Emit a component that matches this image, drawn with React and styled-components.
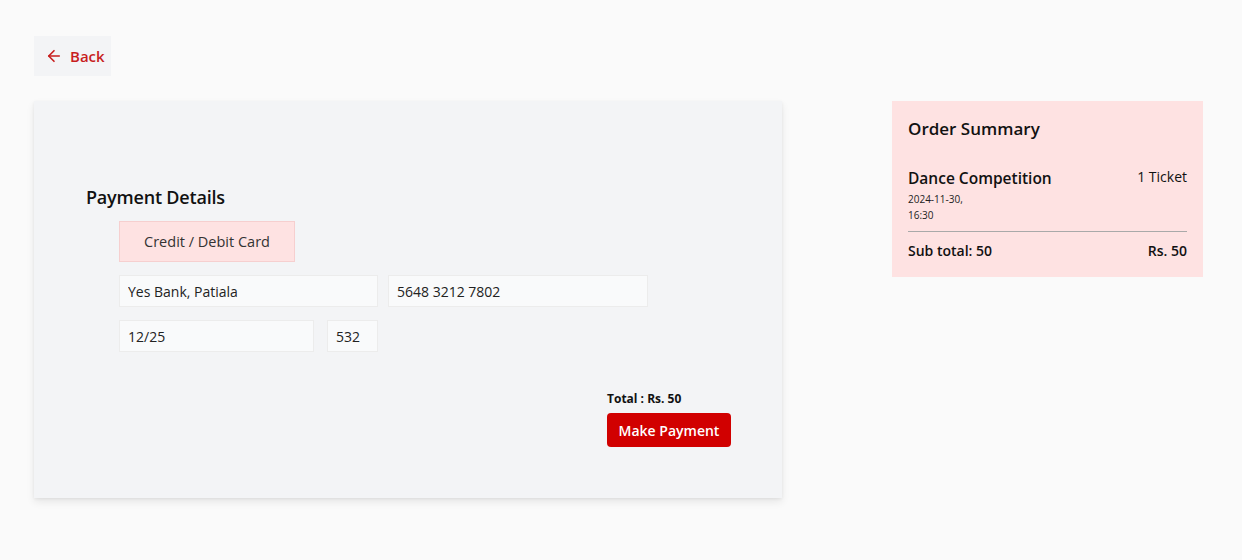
import React from "react";
import styled, { createGlobalStyle } from "styled-components";

const Global = createGlobalStyle`
  html, body { margin: 0; padding: 0; background: #fafafa; }
  body { font-family: "Open Sans", "DejaVu Sans", sans-serif; color: #111; }
  * { box-sizing: border-box; }
`;

const Page = styled.div`
  padding: 36px 34px;
  min-height: 560px;
`;

const BackButton = styled.button`
  display: inline-flex;
  align-items: center;
  gap: 7px;
  height: 40px;
  width: 77px;
  padding: 0 0 0 11px;
  border: none;
  background: #f3f4f6;
  color: #c81e1e;
  font-family: inherit;
  font-size: 15px;
  font-weight: 600;
  cursor: pointer;
`;

const Layout = styled.div`
  display: flex;
  align-items: flex-start;
  gap: 110px;
  margin-top: 25px;
`;

const Card = styled.div`
  width: 748px;
  height: 397px;
  background: #f3f4f6;
  box-shadow: 0 4px 8px rgba(0, 0, 0, 0.08), 0 1px 3px rgba(0, 0, 0, 0.06);
  padding: 84px 51px 0 52px;
  display: flex;
  flex-direction: column;
`;

const Heading = styled.h2`
  margin: 0;
  font-size: 18px;
  font-weight: 600;
  letter-spacing: -0.2px;
  color: #111;
`;

const Form = styled.div`
  padding-left: 33px;
  margin-top: 12px;
  display: flex;
  flex-direction: column;
`;

const MethodButton = styled.button`
  width: 176px;
  height: 41px;
  background: #fee2e2;
  border: 1px solid #f6cfcf;
  font-family: inherit;
  font-size: 14.5px;
  color: #333;
  cursor: pointer;
`;

const Row = styled.div`
  display: flex;
  gap: ${(p) => p.$gap}px;
  margin-top: ${(p) => p.$top}px;
`;

const Input = styled.input`
  width: ${(p) => p.$w}px;
  height: 32px;
  border: 1px solid #ececec;
  background: #f9fafb;
  padding: 0 8px;
  font-family: inherit;
  font-size: 14px;
  color: #222;
  outline: none;
`;

const Footer = styled.div`
  display: flex;
  flex-direction: column;
  align-items: flex-start;
  align-self: flex-end;
  width: 124px;
  margin-top: 39px;
`;

const TotalText = styled.div`
  font-size: 12px;
  font-weight: 700;
  color: #111;
  line-height: 16px;
`;

const PayButton = styled.button`
  margin-top: 6px;
  width: 124px;
  height: 34px;
  background: #d10000;
  color: #fff;
  border: none;
  border-radius: 4px;
  font-family: inherit;
  font-size: 14px;
  font-weight: 600;
  cursor: pointer;
`;

const Summary = styled.div`
  width: 311px;
  background: #fee2e2;
  padding: 16px 16px 16px;
`;

const SummaryTitle = styled.h3`
  margin: 0;
  font-size: 17px;
  font-weight: 600;
  line-height: 24px;
  color: #111;
`;

const ItemRow = styled.div`
  display: flex;
  justify-content: space-between;
  align-items: flex-start;
  margin-top: 24px;
`;

const ItemName = styled.div`
  font-size: 15.5px;
  font-weight: 600;
  line-height: 26px;
  color: #111;
`;

const ItemMeta = styled.div`
  font-size: 10px;
  line-height: 16px;
  color: #222;
`;

const Tickets = styled.div`
  font-size: 14px;
  line-height: 24px;
  color: #111;
`;

const Divider = styled.hr`
  margin: 8px 0 0;
  border: none;
  border-top: 1px solid #a9a9a9;
`;

const SubRow = styled.div`
  display: flex;
  justify-content: space-between;
  margin-top: 9px;
  font-size: 14px;
  font-weight: 600;
  line-height: 20px;
  color: #111;
`;

const ArrowIcon = () => (
  <svg width="18" height="18" viewBox="0 0 24 24" fill="none" stroke="currentColor" strokeWidth="2.2" strokeLinecap="round" strokeLinejoin="round">
    <path d="M19 12H5" />
    <path d="M12 19l-7-7 7-7" />
  </svg>
);

export default function App() {
  return (
    <>
      <Global />
      <Page>
        <BackButton>
          <ArrowIcon />
          Back
        </BackButton>
        <Layout>
          <Card>
            <Heading>Payment Details</Heading>
            <Form>
              <MethodButton>Credit / Debit Card</MethodButton>
              <Row $gap={10} $top={13}>
                <Input $w={259} defaultValue="Yes Bank, Patiala" />
                <Input $w={260} defaultValue="5648 3212 7802" />
              </Row>
              <Row $gap={13} $top={13}>
                <Input $w={195} defaultValue="12/25" />
                <Input $w={51} defaultValue="532" />
              </Row>
            </Form>
            <Footer>
              <TotalText>Total : Rs. 50</TotalText>
              <PayButton>Make Payment</PayButton>
            </Footer>
          </Card>
          <Summary>
            <SummaryTitle>Order Summary</SummaryTitle>
            <ItemRow>
              <div>
                <ItemName>Dance Competition</ItemName>
                <ItemMeta>2024-11-30,</ItemMeta>
                <ItemMeta>16:30</ItemMeta>
              </div>
              <Tickets>1 Ticket</Tickets>
            </ItemRow>
            <Divider />
            <SubRow>
              <span>Sub total: 50</span>
              <span>Rs. 50</span>
            </SubRow>
          </Summary>
        </Layout>
      </Page>
    </>
  );
}
